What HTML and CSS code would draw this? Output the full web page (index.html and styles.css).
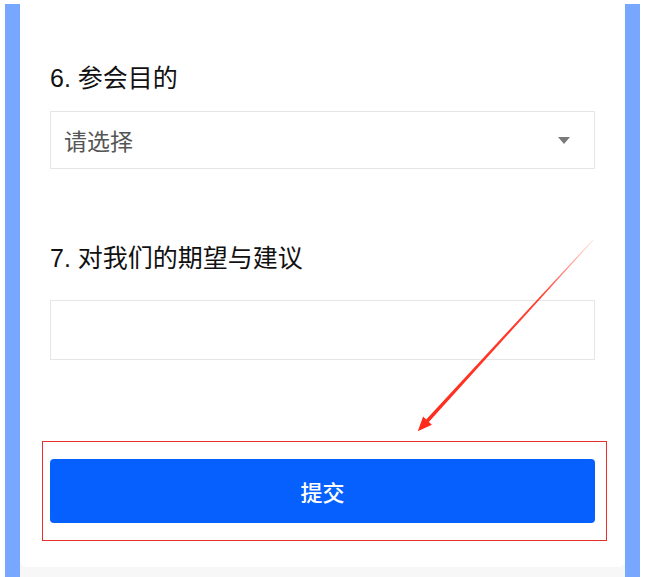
FILE: index.html
```html
<!DOCTYPE html>
<html lang="zh-CN">
  <head>
    <meta charset="UTF-8" />
    <meta name="viewport" content="width=device-width, initial-scale=1.0" />
    <title>参会问卷</title>
    <link rel="stylesheet" href="styles.css">
  </head>

  <body>
    <div class="screen">
      <div class="side"></div>

      <main class="column">
        <form class="card">
          <div class="field">
            <label class="field-title">6. 参会目的</label>
            <div class="select">
              <span class="placeholder">请选择</span>
              <span class="caret"></span>
            </div>
          </div>

          <div class="field field-text">
            <label class="field-title" for="advice">7. 对我们的期望与建议</label>
            <input type="text" id="advice" class="text-input" />
          </div>

          <div class="mark-box">
            <button type="button" class="submit">提交</button>
          </div>
        </form>
        <div class="column-foot"></div>
      </main>

      <div class="side"></div>

      <!-- annotation arrow pointing at the submit button -->
      <svg class="arrow" width="646" height="577" viewBox="0 0 646 577">
        <defs>
          <linearGradient id="fade" x1="593" y1="240" x2="418" y2="431" gradientUnits="userSpaceOnUse">
            <stop offset="0" stop-color="#ff2a1a" stop-opacity="0.15" />
            <stop offset="0.3" stop-color="#ff2a1a" stop-opacity="0.9" />
            <stop offset="1" stop-color="#ff2a1a" />
          </linearGradient>
        </defs>
        <polygon fill="url(#fade)"
          points="593.3,240.3 428.8,421.9 431.9,424.8 417.8,431.2 423.1,416.6 426.2,419.5 592.7,239.7" />
      </svg>
    </div>
  </body>
</html>
```

FILE: styles.css
```css
body {
  margin: 0;
  background: #ffffff;
  font-family: "Liberation Sans", "Noto Sans CJK SC", sans-serif;
}

.screen {
  position: relative;
  display: flex;
  box-sizing: border-box;
  width: 646px;
  height: 577px;
  padding: 4px 6px 0 5px;
}

.side {
  width: 15px;
  flex: none;
  background-color: #78a7ff;
}

.column {
  flex: 1;
  display: flex;
  flex-direction: column;
  background-color: #f7f7f7;
}

.card {
  background-color: #ffffff;
  border-radius: 0 0 6px 6px;
  padding: 56px 30px 26px;
  margin: 0;
}

.field {
  display: flex;
  flex-direction: column;
}

.field-title {
  font-size: 25px;
  line-height: 36px;
  color: #111111;
  margin-bottom: 15px;
}

.select {
  display: flex;
  align-items: center;
  justify-content: space-between;
  box-sizing: border-box;
  height: 58px;
  padding: 0 24px 0 13px;
  border: 1px solid #e6e6e6;
}

.placeholder {
  font-size: 23px;
  color: #555555;
}

.caret {
  width: 0;
  height: 0;
  border-left: 6px solid transparent;
  border-right: 6px solid transparent;
  border-top: 7px solid #7a7a7a;
}

.field-text {
  margin-top: 71px;
}

.field-text .field-title {
  margin-bottom: 24px;
}

.text-input {
  box-sizing: border-box;
  height: 60px;
  margin: 0;
  border: 1px solid #e6e6e6;
  border-radius: 0;
  outline: none;
}

.mark-box {
  margin: 81px -12px 0 -8px;
  padding: 17px 11px 17px 7px;
  border: 1px solid #e8302a;
}

.submit {
  display: block;
  width: 100%;
  height: 64px;
  border: none;
  border-radius: 4px;
  background-color: #0560fe;
  color: #ffffff;
  font-family: "Noto Sans CJK SC", sans-serif;
  font-size: 22px;
  font-weight: 500;
  cursor: pointer;
}

.column-foot {
  flex: 1;
}

.arrow {
  position: absolute;
  top: 0;
  left: 0;
  pointer-events: none;
}
```
